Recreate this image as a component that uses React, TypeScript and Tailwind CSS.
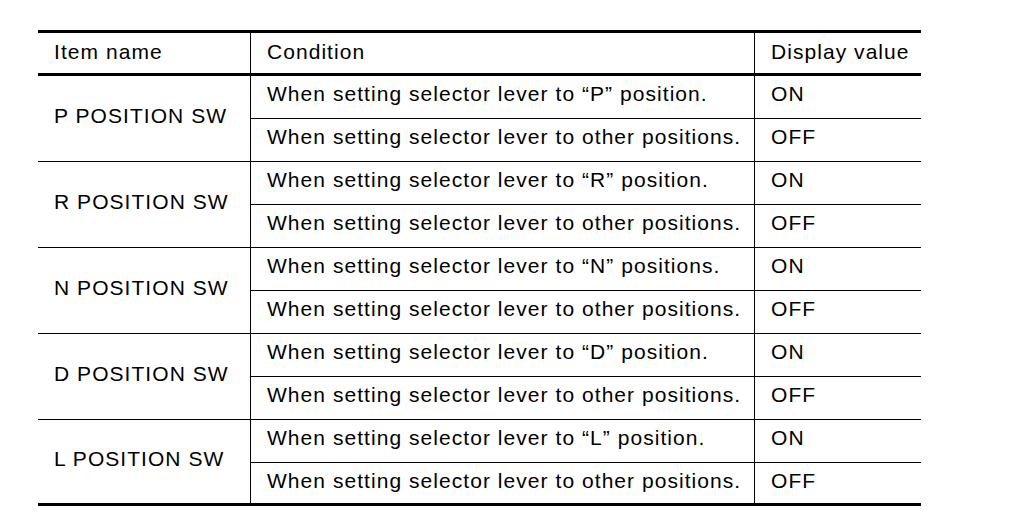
import React from "react";

const groups = [
  { name: "P POSITION SW", cond: "When setting selector lever to \u201cP\u201d position." },
  { name: "R POSITION SW", cond: "When setting selector lever to \u201cR\u201d position." },
  { name: "N POSITION SW", cond: "When setting selector lever to \u201cN\u201d positions." },
  { name: "D POSITION SW", cond: "When setting selector lever to \u201cD\u201d position." },
  { name: "L POSITION SW", cond: "When setting selector lever to \u201cL\u201d position." },
];

export default function App() {
  return (
    <div
      className="w-[1024px] h-[524px] bg-white text-black pt-[30px] pl-[38px]"
      style={{ fontFamily: '"Liberation Sans", Arial, sans-serif' }}
    >
      <div className="w-[883px] border-t-[3px] border-b-[3px] border-black text-[21px] leading-5 tracking-[1.05px]">
        <div className="flex h-[43px] border-b-[3px] border-black">
          <div className="w-[212px] pl-[16px] pt-[9px]">Item name</div>
          <div className="w-[504px] border-l border-black pl-[16px] pt-[9px]">Condition</div>
          <div className="flex-1 border-l border-black pl-[16px] pt-[9px]">Display value</div>
        </div>
        {groups.map((g, i) => (
          <div key={g.name} className={`flex ${i > 0 ? "border-t border-black" : ""}`}>
            <div className="w-[212px] flex items-center pl-[16px] pb-[6px] whitespace-nowrap">{g.name}</div>
            <div className="flex-1 flex flex-col border-l border-black">
              <div className="flex h-[42px]">
                <div className="w-[503px] pl-[16px] pt-[8px] whitespace-nowrap">{g.cond}</div>
                <div className="flex-1 border-l border-black pl-[16px] pt-[8px]">ON</div>
              </div>
              <div className={`flex border-t border-black ${i === groups.length - 1 ? "h-[41px]" : "h-[43px]"}`}>
                <div className="w-[503px] pl-[16px] pt-[8px] whitespace-nowrap">When setting selector lever to other positions.</div>
                <div className="flex-1 border-l border-black pl-[16px] pt-[8px]">OFF</div>
              </div>
            </div>
          </div>
        ))}
      </div>
    </div>
  );
}
